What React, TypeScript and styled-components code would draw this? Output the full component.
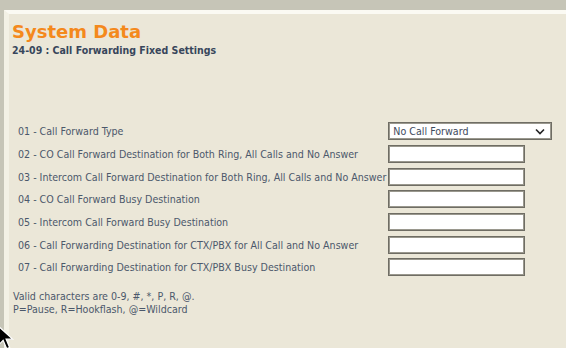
import React from "react";
import styled, { createGlobalStyle } from "styled-components";

const GlobalStyle = createGlobalStyle`
  html, body { margin: 0; padding: 0; }
  body {
    background: #c6c5b7;
    width: 566px;
    height: 348px;
    overflow: hidden;
  }
  * { box-sizing: border-box; }
`;

const Page = styled.div`
  position: relative;
  height: 348px;
  overflow: hidden;
  padding: 10px 0 0 4px;
`;

const Panel = styled.div`
  height: 100%;
  background: #ebe7d8;
  border-top: 4px solid #fbfaf3;
  border-left: 5px solid #f3f1e5;
  font-family: "DejaVu Sans Condensed", "Liberation Sans", sans-serif;
  display: flex;
  flex-direction: column;
`;

const Title = styled.h1`
  margin: 7px 0 0 3px;
  font-family: "DejaVu Sans", sans-serif;
  font-weight: bold;
  font-size: 18px;
  line-height: 22px;
  color: #f4891c;
`;

const Subtitle = styled.h2`
  margin: 1px 0 0 3px;
  font-family: "DejaVu Sans Condensed", "Liberation Sans", sans-serif;
  font-weight: bold;
  font-size: 10.5px;
  line-height: 13px;
  color: #38465b;
`;

const Form = styled.div`
  display: grid;
  grid-template-columns: auto auto;
  justify-content: start;
  grid-auto-rows: 22.67px;
  align-items: center;
  margin: 63px 0 0 9px;
`;

const Label = styled.div`
  font-size: 10.6px;
  color: #4b586b;
  white-space: nowrap;
  padding-right: 2px;
`;

const Field = styled.div<{ $wide?: boolean }>`
  width: ${(p) => (p.$wide ? 164 : 137)}px;
  height: 18px;
  border: 1px solid #6f6d64;
  box-shadow: inset 0 0 0 1px #9a988e;
  background: #ffffff;
  display: flex;
  align-items: center;
  justify-content: space-between;
  padding: 0 6px 0 4px;
  font-size: 10.6px;
  color: #3d4a5d;
`;

const Notes = styled.div`
  margin: 11px 0 0 4px;
  font-size: 10.6px;
  line-height: 13px;
  color: #4b586b;
`;

const Cursor = styled.svg`
  position: absolute;
  left: -3px;
  top: 325px;
`;

const rows = [
  "02 - CO Call Forward Destination for Both Ring, All Calls and No Answer",
  "03 - Intercom Call Forward Destination for Both Ring, All Calls and No Answer",
  "04 - CO Call Forward Busy Destination",
  "05 - Intercom Call Forward Busy Destination",
  "06 - Call Forwarding Destination for CTX/PBX for All Call and No Answer",
  "07 - Call Forwarding Destination for CTX/PBX Busy Destination",
];

export default function App() {
  return (
    <>
      <GlobalStyle />
      <Page>
        <Panel>
          <Title>System Data</Title>
          <Subtitle>24-09 : Call Forwarding Fixed Settings</Subtitle>
          <Form>
            <Label>01 - Call Forward Type</Label>
            <Field $wide>
              <span>No Call Forward</span>
              <svg width="10" height="7" viewBox="0 0 10 7">
                <path d="M1 1.5 L5 5.5 L9 1.5" fill="none" stroke="#222" strokeWidth="1.6" />
              </svg>
            </Field>
            {rows.map((r) => (
              <React.Fragment key={r}>
                <Label>{r}</Label>
                <Field />
              </React.Fragment>
            ))}
          </Form>
          <Notes>
            Valid characters are 0-9, #, *, P, R, @.
            <br />
            P=Pause, R=Hookflash, @=Wildcard
          </Notes>
        </Panel>
        <Cursor width="17" height="26" viewBox="0 0 14 22">
          <path d="M1 1 L1 17 L5 13 L8 20 L10.5 19 L7.5 12 L13 12 Z" fill="#000" stroke="#fff" strokeWidth="1" />
        </Cursor>
      </Page>
    </>
  );
}
